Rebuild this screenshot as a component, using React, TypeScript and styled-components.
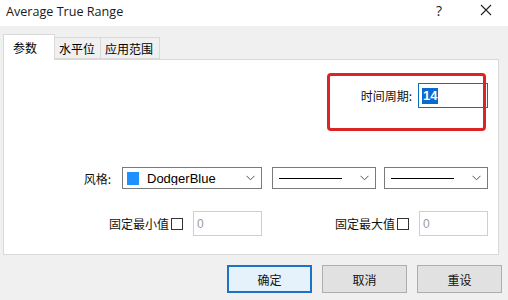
import React from "react";
import styled, { createGlobalStyle } from "styled-components";

const Global = createGlobalStyle`
  html, body { margin: 0; padding: 0; background: #f0f0f0; }
  body { font-family: "Noto Sans CJK SC", "Noto Sans", sans-serif; font-size: 12px; color: #000; }
`;

const Window = styled.div`
  width: 508px;
  height: 300px;
  background: #f0f0f0;
  display: flex;
  flex-direction: column;
  overflow: hidden;
`;

const TitleBar = styled.div`
  height: 26px;
  background: #fff;
  display: flex;
  align-items: center;
  padding-left: 6px;
  flex-shrink: 0;
`;

const Title = styled.div`
  font-family: "Open Sans", "Noto Sans", sans-serif;
  font-size: 12.6px;
  color: #1a1a1a;
  flex: 1;
  margin-top: -4px;
`;

const TitleButton = styled.div<{ $w: number; $mr?: number }>`
  width: ${(p) => p.$w}px;
  height: 26px;
  margin-right: ${(p) => p.$mr ?? 0}px;
  display: flex;
  align-items: center;
  justify-content: center;
  font-family: "Open Sans", sans-serif;
  font-size: 14px;
  color: #222;
  margin-top: -6px;
`;

const Body = styled.div`
  flex: 1;
  display: flex;
  flex-direction: column;
  padding: 8px 9px 0 3px;
`;

const TabStrip = styled.div`
  display: flex;
  align-items: flex-end;
  height: 25px;
  position: relative;
  z-index: 1;
`;

const Tab = styled.div<{ $active?: boolean; $w: number }>`
  width: ${(p) => p.$w}px;
  height: ${(p) => (p.$active ? 26 : 22)}px;
  box-sizing: border-box;
  background: ${(p) => (p.$active ? "#fff" : "#f0f0f0")};
  border: 1px solid #d9d9d9;
  border-bottom: ${(p) => (p.$active ? "none" : "1px solid #d9d9d9")};
  border-left: ${(p) => (p.$active ? "1px solid #d9d9d9" : "none")};
  display: flex;
  align-items: ${(p) => (p.$active ? "flex-start" : "center")};
  padding-top: ${(p) => (p.$active ? "4px" : "0")};
  padding-left: ${(p) => (p.$active ? 9 : 4)}px;
  font-size: 12px;
  margin-bottom: ${(p) => (p.$active ? "-1px" : "0")};
`;

const Panel = styled.div`
  height: 196px;
  box-sizing: border-box;
  background: #fff;
  border: 1px solid #d9d9d9;
  position: relative;
  display: flex;
  flex-direction: column;
  padding: 23px 10px 0 0;
`;

const PeriodRow = styled.div`
  display: flex;
  justify-content: flex-end;
  align-items: center;
  gap: 6px;
`;

const Highlight = styled.div`
  position: absolute;
  left: 323px;
  top: 13px;
  width: 159px;
  height: 58px;
  box-sizing: border-box;
  border: 3px solid #dc2424;
  border-radius: 4px;
  pointer-events: none;
`;

const Label = styled.span`
  font-size: 12px;
  color: #111;
  white-space: nowrap;
`;

const TextBox = styled.div<{ $w: number; $h: number; $focus?: boolean }>`
  width: ${(p) => p.$w}px;
  height: ${(p) => p.$h}px;
  box-sizing: border-box;
  border: 1px solid ${(p) => (p.$focus ? "#0a6fc0" : "#cfcfcf")};
  background: #fff;
  display: flex;
  align-items: center;
  padding-left: 3px;
  font-family: "Liberation Sans", Arial, sans-serif;
  font-size: 12px;
  color: #9a9a9a;
`;

const Selected = styled.span`
  background: #0a6ad0;
  color: #fff;
  font-family: "Liberation Sans", Arial, sans-serif;
  font-size: 13px;
  font-weight: bold;
  line-height: 16px;
  padding: 0 1px;
`;

const StyleRow = styled.div`
  display: flex;
  align-items: center;
  justify-content: flex-end;
  margin-top: 59px;
`;

const Combo = styled.div<{ $w: number; $ml: number }>`
  width: ${(p) => p.$w}px;
  height: 22px;
  box-sizing: border-box;
  margin-left: ${(p) => p.$ml}px;
  border: 1px solid #7a7a7a;
  background: #fff;
  display: flex;
  align-items: center;
  padding: 0 6px 0 4px;
`;

const Swatch = styled.span`
  width: 12px;
  height: 13px;
  background: #1e90ff;
  flex-shrink: 0;
`;

const ComboText = styled.span`
  font-family: "Liberation Sans", Arial, sans-serif;
  font-size: 13px;
  margin-left: 8px;
  flex: 1;
  height: 14px;
  line-height: 16px;
  overflow: hidden;
`;

const LineSample = styled.span`
  flex: 1;
  height: 1px;
  background: #000;
  margin: 0 18px 0 2px;
`;

const FixedRow = styled.div`
  display: flex;
  align-items: center;
  margin-top: 22px;
`;

const FixedGroup = styled.div<{ $ml: number }>`
  display: flex;
  align-items: center;
  margin-left: ${(p) => p.$ml}px;
`;

const Check = styled.span`
  width: 12px;
  height: 12px;
  box-sizing: border-box;
  border: 1px solid #333;
  margin: 0 10px 0 2px;
  background: #fff;
`;

const ButtonRow = styled.div`
  display: flex;
  justify-content: flex-end;
  gap: 10px;
  margin-top: 10px;
  margin-right: -3px;
`;

const Button = styled.div<{ $primary?: boolean }>`
  width: 85px;
  height: 28px;
  box-sizing: border-box;
  border: ${(p) => (p.$primary ? "2px solid #1a73c4" : "1px solid #adadad")};
  background: ${(p) => (p.$primary ? "#e5f1fb" : "#e1e1e1")};
  display: flex;
  align-items: center;
  justify-content: center;
  font-size: 12px;
  color: #111;
`;

const Chevron = () => (
  <svg width="9" height="6" viewBox="0 0 9 6">
    <path d="M0.5 0.8 L4.5 4.8 L8.5 0.8" fill="none" stroke="#555" strokeWidth="1" />
  </svg>
);

const CloseIcon = () => (
  <svg width="12" height="12" viewBox="0 0 12 12">
    <path d="M1 1 L11 11 M11 1 L1 11" stroke="#222" strokeWidth="1.1" />
  </svg>
);

export default function App() {
  return (
    <Window>
      <Global />
      <TitleBar>
        <Title>Average True Range</Title>
        <TitleButton $w={20} $mr={24}>?</TitleButton>
        <TitleButton $w={26}>
          <CloseIcon />
        </TitleButton>
        <TitleButton $w={9} />
      </TitleBar>
      <Body>
        <TabStrip>
          <Tab $active $w={52}>参数</Tab>
          <Tab $w={46}>水平位</Tab>
          <Tab $w={59}>应用范围</Tab>
        </TabStrip>
        <Panel>
          <Highlight />
          <PeriodRow>
            <Label>时间周期:</Label>
            <TextBox $w={70} $h={25} $focus>
              <Selected>14</Selected>
            </TextBox>
          </PeriodRow>
          <StyleRow>
            <Label>风格:</Label>
            <Combo $w={140} $ml={11}>
              <Swatch />
              <ComboText>DodgerBlue</ComboText>
              <Chevron />
            </Combo>
            <Combo $w={104} $ml={10}>
              <LineSample />
              <Chevron />
            </Combo>
            <Combo $w={104} $ml={8}>
              <LineSample />
              <Chevron />
            </Combo>
          </StyleRow>
          <FixedRow>
            <FixedGroup $ml={105}>
              <Label>固定最小值</Label>
              <Check />
              <TextBox $w={69} $h={25}>0</TextBox>
            </FixedGroup>
            <FixedGroup $ml={73}>
              <Label>固定最大值</Label>
              <Check />
              <TextBox $w={69} $h={25}>0</TextBox>
            </FixedGroup>
          </FixedRow>
        </Panel>
        <ButtonRow>
          <Button $primary>确定</Button>
          <Button>取消</Button>
          <Button>重设</Button>
        </ButtonRow>
      </Body>
    </Window>
  );
}
